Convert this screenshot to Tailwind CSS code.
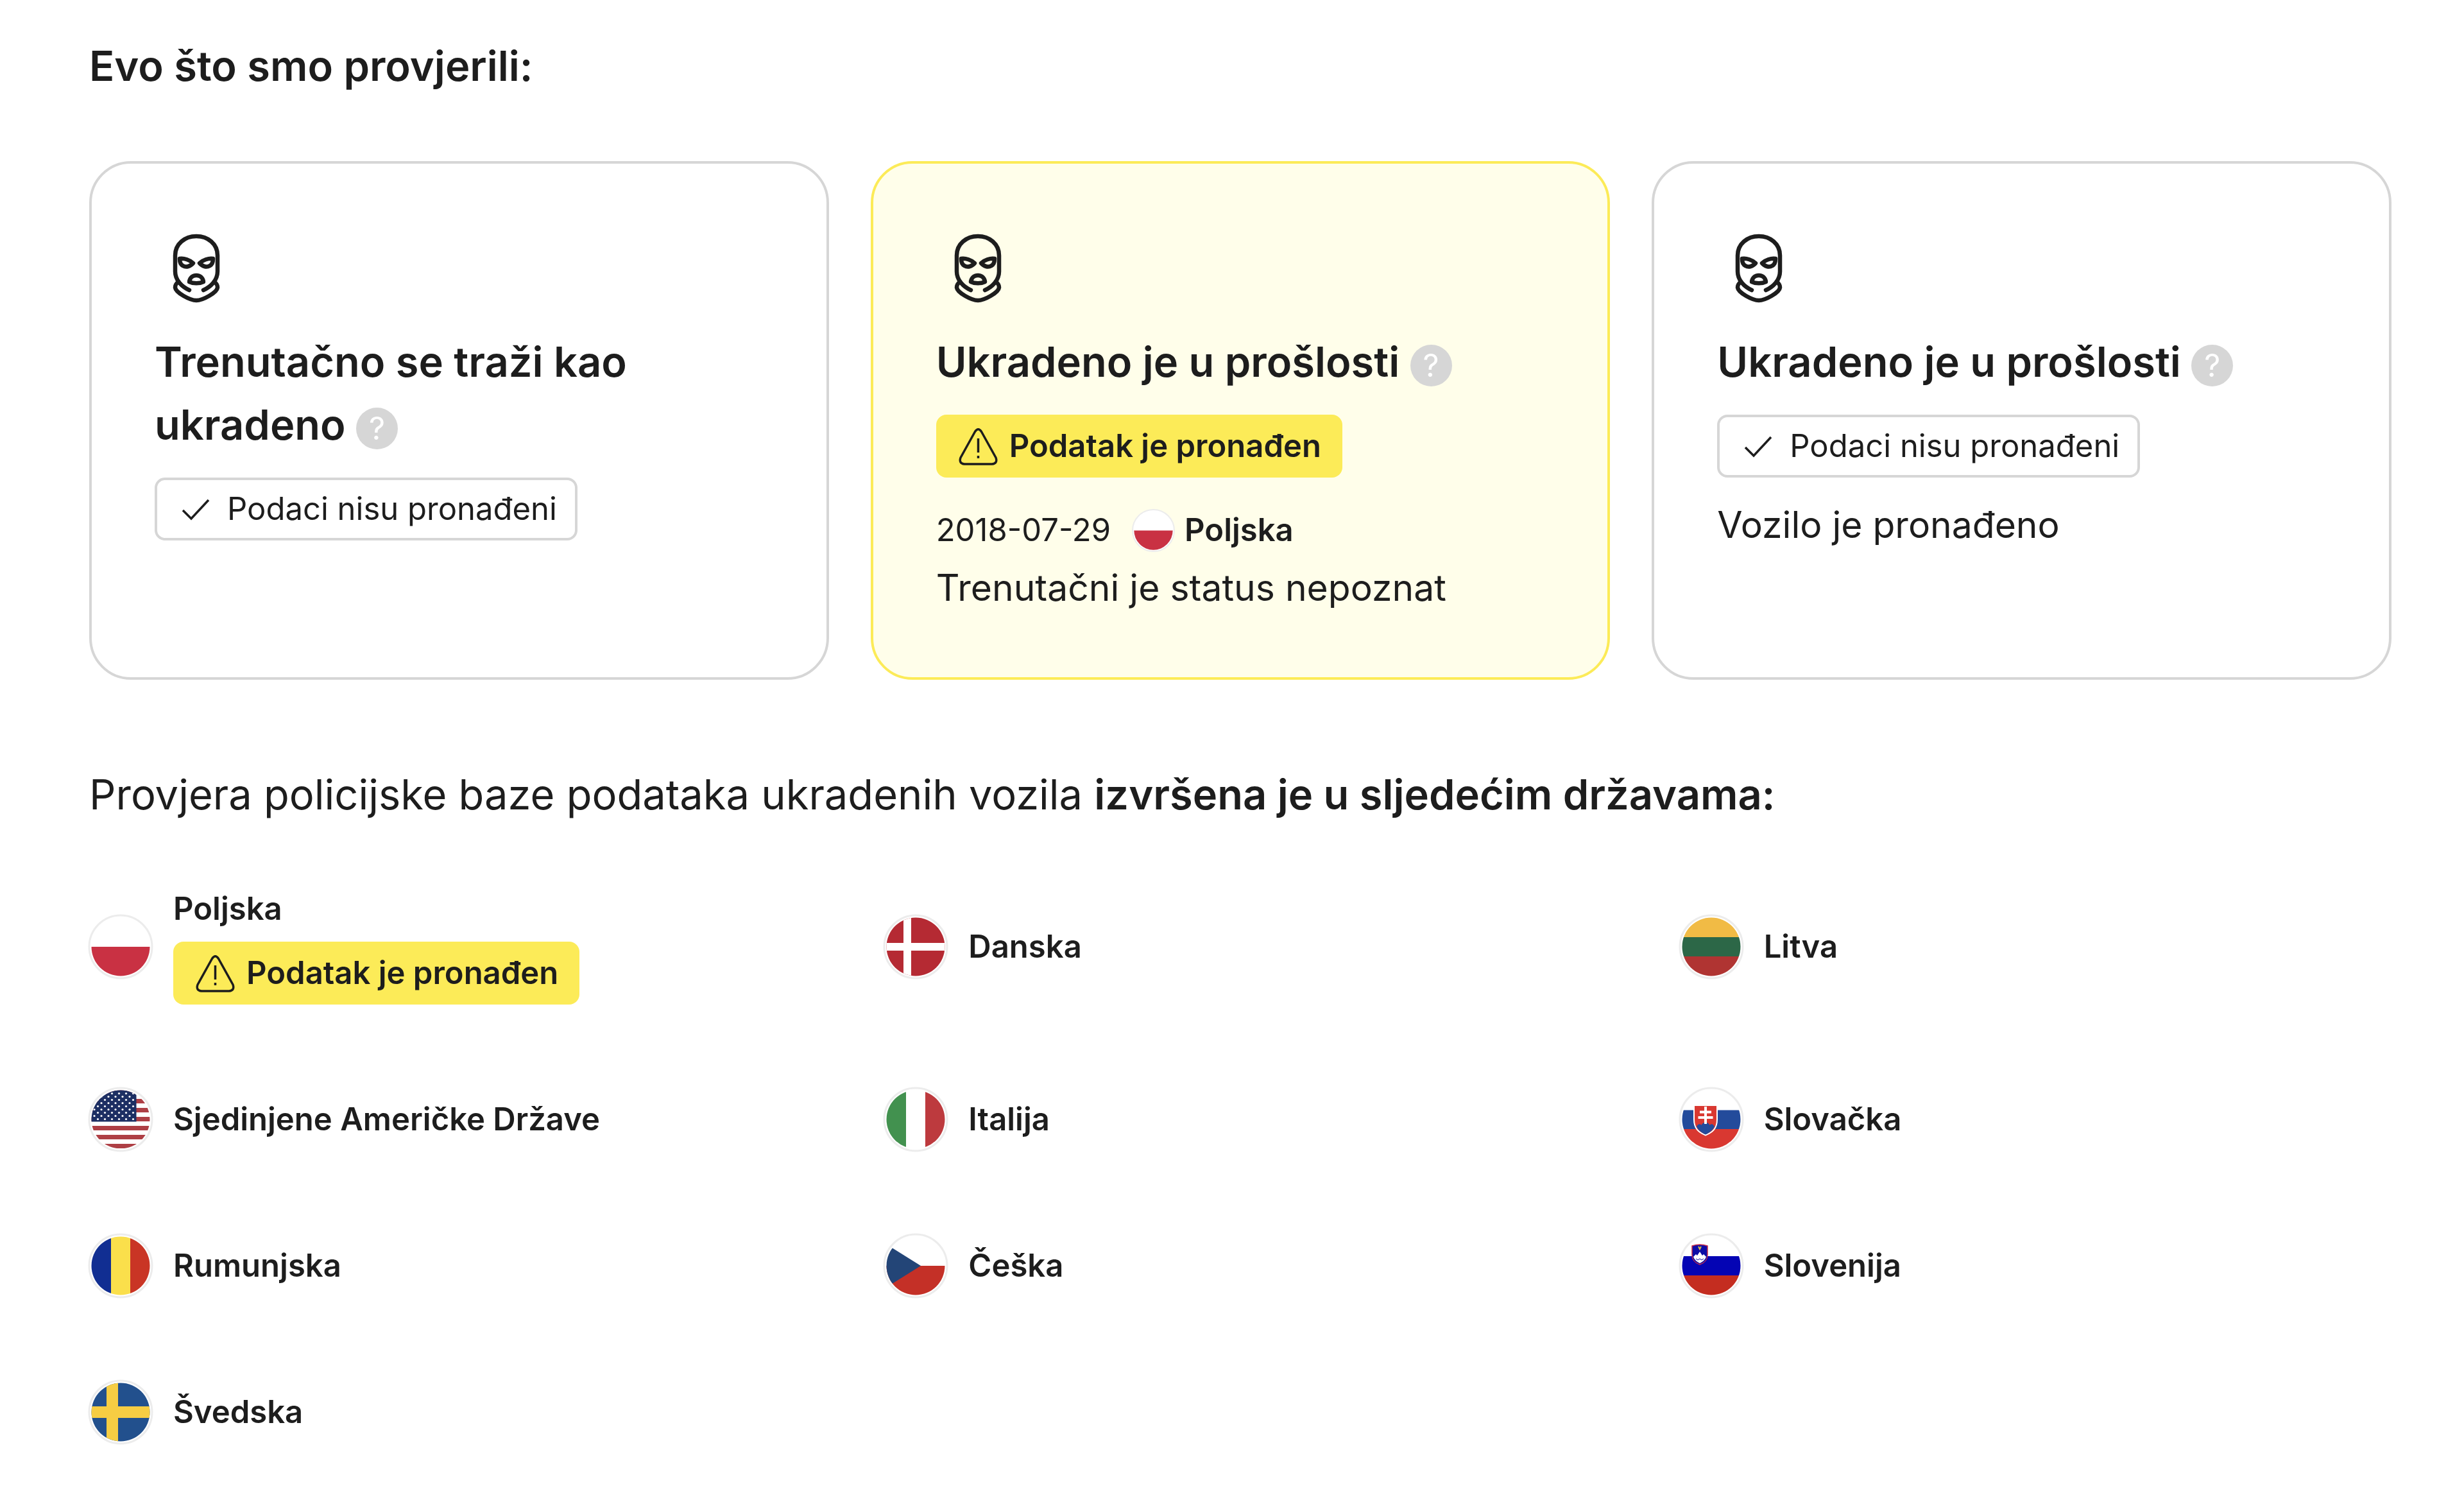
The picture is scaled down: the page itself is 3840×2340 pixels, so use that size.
<!DOCTYPE html>
<html lang="hr">
<head>
  <meta charset="UTF-8" />
  <meta name="viewport" content="width=device-width, initial-scale=1.0" />
  <title>Provjera krađe vozila</title>
  <script src="https://cdn.jsdelivr.net/npm/@tailwindcss/browser@4"></script>
</head>
<body class="bg-white text-[#1d1d1d] font-['Inter',sans-serif]">
  <!-- Shared icons and flags -->
  <svg class="absolute size-0" aria-hidden="true">
    <defs>
      <clipPath id="round"><circle r="45.5" /></clipPath>
      <pattern id="stars" x="-38" y="-3" width="11" height="10" patternUnits="userSpaceOnUse">
        <circle cx="2.5" cy="2.5" r="1.6" fill="#fff" />
        <circle cx="8" cy="7.5" r="1.6" fill="#fff" />
      </pattern>
      <symbol id="mask" viewBox="0 0 130 130">
        <g fill="none" stroke="#1d1d1d" stroke-width="6.500" stroke-linecap="round" stroke-linejoin="round">
          <path d="M54 99C43 94 32 84 32 70V45C32 27 47 15 65 15S98 27 98 45V70C98 84 87 94 76 99" />
          <path d="M37 86C33 89 32 91 32 95C33 103 55 115 65 115S97 103 98 95C98 91 97 89 93 86" />
          <path d="M39 50C46 49 55 52 60 57C56 62 49 64 44 61C40 59 39 55 39 50Z" />
          <path d="M91 50C84 49 75 52 70 57C74 62 81 64 86 61C90 59 91 55 91 50Z" />
          <path d="M54 86C55 79 60 76 65 76S75 79 76 86C70 89 60 89 54 86Z" />
        </g>
      </symbol>
      <symbol id="check" viewBox="0 0 65 65">
        <path d="M12 34L25 47L52 18" fill="none" stroke="#1d1d1d" stroke-width="3.5" />
      </symbol>
      <symbol id="warning" viewBox="0 0 65 65">
        <path d="M27.500 9.500Q32.500 2 37.500 9.500L60 50Q63 59 54 60H11Q2 59 5 50Z" fill="none" stroke="#1d1d1d" stroke-width="3.500" stroke-linejoin="round" />
        <path d="M32.500 20V42M32.500 47V51" fill="none" stroke="#1d1d1d" stroke-width="3.500" />
      </symbol>
      <symbol id="pl" viewBox="-49 -49 98 98" overflow="visible">
        <circle r="49" fill="#fff" stroke="#ececec" stroke-width="3" />
        <path d="M-50 0H50V50H-50Z" fill="#c93143" clip-path="url(#round)" />
      </symbol>
      <symbol id="dk" viewBox="-49 -49 98 98" overflow="visible">
        <circle r="49" fill="#fff" stroke="#ececec" stroke-width="3" />
        <g clip-path="url(#round)">
          <path d="M-50 -50H50V50H-50Z" fill="#b52a33" />
          <path d="M-13 -50V50M-50 0H50" stroke="#fff" stroke-width="12" />
        </g>
      </symbol>
      <symbol id="lt" viewBox="-49 -49 98 98" overflow="visible">
        <circle r="49" fill="#fff" stroke="#ececec" stroke-width="3" />
        <g clip-path="url(#round)">
          <path d="M-50 -50H50V-15H-50Z" fill="#f1bb45" />
          <path d="M-50 -15H50V15H-50Z" fill="#2c6747" />
          <path d="M-50 15H50V50H-50Z" fill="#b03432" />
        </g>
      </symbol>
      <symbol id="us" viewBox="-49 -49 98 98" overflow="visible">
        <circle r="49" fill="#fff" stroke="#ececec" stroke-width="3" />
        <g clip-path="url(#round)">
          <path d="M-50 -42.500H50M-50 -28.500H50M-50 -14.500H50M-50 -.5H50M-50 13.500H50M-50 27.500H50M-50 41.500H50" stroke="#ae3f45" stroke-width="7" />
          <path d="M-50 -50H24.500V3.500H-50Z" fill="#1d2f63" />
          <path d="M-45 -43H22V1H-45Z" fill="url(#stars)" />
        </g>
      </symbol>
      <symbol id="it" viewBox="-49 -49 98 98" overflow="visible">
        <circle r="49" fill="#fff" stroke="#ececec" stroke-width="3" />
        <g clip-path="url(#round)">
          <path d="M-50 -50H-15V50H-50Z" fill="#42914f" />
          <path d="M15 -50H50V50H15Z" fill="#bd3a3e" />
        </g>
      </symbol>
      <symbol id="sk" viewBox="-49 -49 98 98" overflow="visible">
        <circle r="49" fill="#fff" stroke="#ececec" stroke-width="3" />
        <g clip-path="url(#round)">
          <path d="M-50 -14.500H50V15H-50Z" fill="#234b9b" />
          <path d="M-50 15H50V50H-50Z" fill="#d93831" />
        </g>
        <path d="M-27 -22H9V0C9 14 2 20 -9 24.500C-20 20 -27 14 -27 0Z" fill="#d93831" stroke="#fff" stroke-width="2" />
        <path d="M-23 11C-20 6 -17 7 -15.500 9C-13 3 -5 3 -2.500 9C-1 7 2 6 5 11C2 17 -3 21 -9 23.500C-15 21 -20 17 -23 11Z" fill="#234b9b" />
        <path d="M-9 -20V7M-18 -11.500H0M-20.500 -3H2.500" stroke="#fff" stroke-width="4" />
      </symbol>
      <symbol id="ro" viewBox="-49 -49 98 98" overflow="visible">
        <circle r="49" fill="#fff" stroke="#ececec" stroke-width="3" />
        <g clip-path="url(#round)">
          <path d="M-50 -50H-15V50H-50Z" fill="#112e92" />
          <path d="M-15 -50H15V50H-15Z" fill="#fadf4b" />
          <path d="M15 -50H50V50H15Z" fill="#c93525" />
        </g>
      </symbol>
      <symbol id="cz" viewBox="-49 -49 98 98" overflow="visible">
        <circle r="49" fill="#fff" stroke="#ececec" stroke-width="3" />
        <g clip-path="url(#round)">
          <path d="M-50 0H50V50H-50Z" fill="#c43027" />
          <path d="M-59 -42L8 0L-59 42Z" fill="#234577" />
        </g>
      </symbol>
      <symbol id="si" viewBox="-49 -49 98 98" overflow="visible">
        <circle r="49" fill="#fff" stroke="#ececec" stroke-width="3" />
        <g clip-path="url(#round)">
          <path d="M-50 -15H50V15H-50Z" fill="#0404b4" />
          <path d="M-50 15H50V50H-50Z" fill="#c42d20" />
        </g>
        <path d="M-30 -31Q-18 -35 -6 -31V-17C-6 -9 -10 -5 -18 -2C-26 -5 -30 -9 -30 -17Z" fill="#0d0da6" stroke="#c42d4a" stroke-width="1.500" />
        <path d="M-28 -14L-24 -18L-22 -16L-18 -22L-14 -16L-12 -18L-8 -14Q-10 -8 -18 -4Q-26 -8 -28 -14Z" fill="#fff" />
        <path d="M-24 -11L-21 -9L-18 -11L-15 -9L-12 -11" fill="none" stroke="#0d0da6" stroke-width="1" />
        <path d="M-20 -30L-18 -26L-16 -30" fill="none" stroke="#d8c04a" stroke-width="2" />
      </symbol>
      <symbol id="se" viewBox="-49 -49 98 98" overflow="visible">
        <circle r="49" fill="#fff" stroke="#ececec" stroke-width="3" />
        <g clip-path="url(#round)">
          <path d="M-50 -50H50V50H-50Z" fill="#22508d" />
          <path d="M-13 -50V50M-50 0H50" stroke="#f6cd43" stroke-width="18" />
        </g>
      </symbol>
    </defs>
  </svg>

  <main class="pt-[54px] pr-[113px] pb-[53px] pl-[139px]">
    <h1 class="text-[65px] leading-[98px] font-semibold">Evo što smo provjerili:</h1>

    <!-- Result cards -->
    <div class="mt-[99px] grid grid-cols-3 gap-[65px]">
      <!-- Currently wanted -->
      <section class="rounded-[65px] border-4 border-[#d6d6d6] p-[98px]">
        <svg class="size-[130px]" aria-hidden="true"><use href="#mask" /></svg>
        <h2 class="mt-8 text-[65px] leading-[98px] font-semibold">
          Trenutačno se traži kao ukradeno
          <button type="button" aria-label="Pomoć" class="inline-flex size-[65px] items-center justify-center rounded-full bg-[#d6d6d6] align-baseline text-[49px] leading-none font-normal text-white">?</button>
        </h2>
        <div class="mt-[33px] flex h-[98px] w-fit items-center gap-4 rounded-2xl border-4 border-[#d6d6d6] px-[28px] text-[49px]">
          <svg class="size-[65px]" aria-hidden="true"><use href="#check" /></svg>
          Podaci nisu pronađeni
        </div>
      </section>

      <!-- Stolen in the past, record found -->
      <section class="rounded-[65px] border-4 border-[#fceb58] bg-[#fffeea] p-[98px]">
        <svg class="size-[130px]" aria-hidden="true"><use href="#mask" /></svg>
        <h2 class="mt-8 text-[65px] leading-[98px] font-semibold">
          Ukradeno je u prošlosti
          <button type="button" aria-label="Pomoć" class="inline-flex size-[65px] items-center justify-center rounded-full bg-[#d6d6d6] align-baseline text-[49px] leading-none font-normal text-white">?</button>
        </h2>
        <div class="mt-[33px] flex h-[98px] w-fit items-center gap-4 rounded-2xl bg-[#fceb58] px-[33px] text-[49px] font-semibold">
          <svg class="size-[65px]" aria-hidden="true"><use href="#warning" /></svg>
          Podatak je pronađen
        </div>
        <div class="mt-[33px] flex h-[98px] items-center text-[49px]">
          <span>2018-07-29</span>
          <svg class="mr-4 ml-[34px] size-[65px] overflow-visible" aria-hidden="true"><use href="#pl" /></svg>
          <span class="font-semibold">Poljska</span>
        </div>
        <p class="text-[57px] leading-[82px]">Trenutačni je status nepoznat</p>
      </section>

      <!-- Stolen in the past, nothing found -->
      <section class="rounded-[65px] border-4 border-[#d6d6d6] p-[98px]">
        <svg class="size-[130px]" aria-hidden="true"><use href="#mask" /></svg>
        <h2 class="mt-8 text-[65px] leading-[98px] font-semibold">
          Ukradeno je u prošlosti
          <button type="button" aria-label="Pomoć" class="inline-flex size-[65px] items-center justify-center rounded-full bg-[#d6d6d6] align-baseline text-[49px] leading-none font-normal text-white">?</button>
        </h2>
        <div class="mt-[33px] flex h-[98px] w-fit items-center gap-4 rounded-2xl border-4 border-[#d6d6d6] px-[28px] text-[49px]">
          <svg class="size-[65px]" aria-hidden="true"><use href="#check" /></svg>
          Podaci nisu pronađeni
        </div>
        <p class="mt-[33px] text-[57px] leading-[82px]">Vozilo je pronađeno</p>
      </section>
    </div>

    <!-- Checked countries -->
    <p class="mt-[130px] text-[65px] leading-[98px]">Provjera policijske baze podataka ukradenih vozila <b class="font-semibold">izvršena je u sljedećim državama:</b></p>

    <ul class="mt-[98px] grid grid-cols-3 gap-[130px] text-[49px] leading-[62px] font-semibold">
      <li class="flex items-center gap-[33px]">
        <svg class="size-[98px] shrink-0 overflow-visible" aria-hidden="true"><use href="#pl" /></svg>
        <div>
          <div>Poljska</div>
          <div class="mt-5 flex h-[98px] w-fit items-center gap-4 rounded-2xl bg-[#fceb58] px-[33px]">
            <svg class="size-[65px]" aria-hidden="true"><use href="#warning" /></svg>
            Podatak je pronađen
          </div>
        </div>
      </li>
      <li class="flex items-center gap-[33px]">
        <svg class="size-[98px] shrink-0 overflow-visible" aria-hidden="true"><use href="#dk" /></svg>
        Danska
      </li>
      <li class="flex items-center gap-[33px]">
        <svg class="size-[98px] shrink-0 overflow-visible" aria-hidden="true"><use href="#lt" /></svg>
        Litva
      </li>
      <li class="flex items-center gap-[33px]">
        <svg class="size-[98px] shrink-0 overflow-visible" aria-hidden="true"><use href="#us" /></svg>
        Sjedinjene Američke Države
      </li>
      <li class="flex items-center gap-[33px]">
        <svg class="size-[98px] shrink-0 overflow-visible" aria-hidden="true"><use href="#it" /></svg>
        Italija
      </li>
      <li class="flex items-center gap-[33px]">
        <svg class="size-[98px] shrink-0 overflow-visible" aria-hidden="true"><use href="#sk" /></svg>
        Slovačka
      </li>
      <li class="flex items-center gap-[33px]">
        <svg class="size-[98px] shrink-0 overflow-visible" aria-hidden="true"><use href="#ro" /></svg>
        Rumunjska
      </li>
      <li class="flex items-center gap-[33px]">
        <svg class="size-[98px] shrink-0 overflow-visible" aria-hidden="true"><use href="#cz" /></svg>
        Češka
      </li>
      <li class="flex items-center gap-[33px]">
        <svg class="size-[98px] shrink-0 overflow-visible" aria-hidden="true"><use href="#si" /></svg>
        Slovenija
      </li>
      <li class="flex items-center gap-[33px]">
        <svg class="size-[98px] shrink-0 overflow-visible" aria-hidden="true"><use href="#se" /></svg>
        Švedska
      </li>
    </ul>
  </main>
</body>
</html>
